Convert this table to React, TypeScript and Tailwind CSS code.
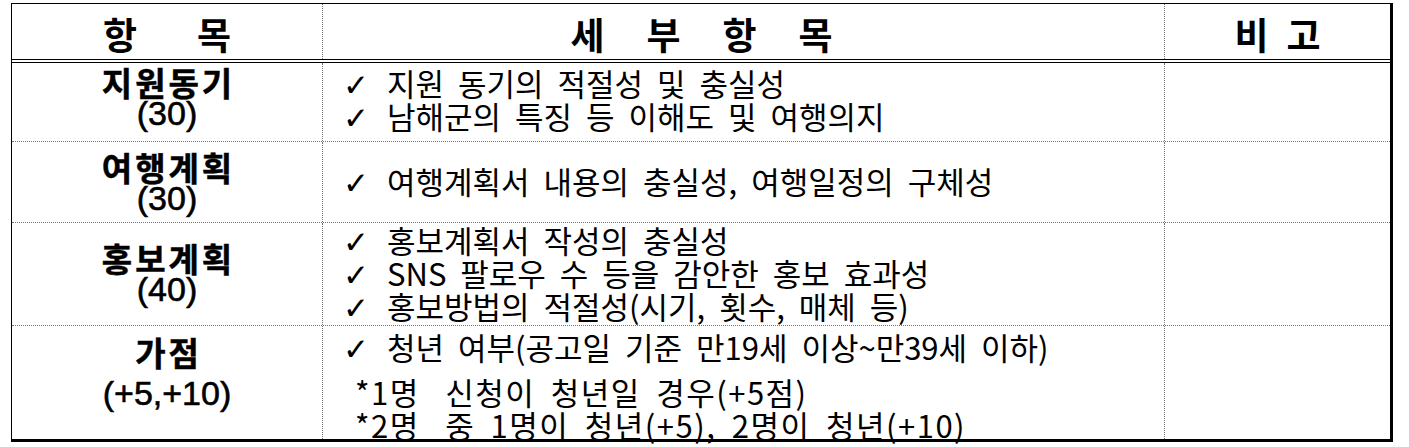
const Check = () => (
  <span className="inline-block w-[44px] font-['DejaVu_Sans',sans-serif] font-bold text-[31px] leading-none">✓</span>
);

const Line = ({ children, className = "" }: { children: React.ReactNode; className?: string }) => (
  <div className={`leading-[29px] whitespace-nowrap ${className}`}>{children}</div>
);

const Label = ({ name, score, gap = "" }: { name: string; score: string; gap?: string }) => (
  <>
    <div className="font-['Noto_Sans_CJK_KR',sans-serif] font-bold text-[33px] tracking-[3px] leading-[31px] pl-[3px] [-webkit-text-stroke:0.5px_black]">
      {name}
    </div>
    <div className={`font-['Liberation_Sans',sans-serif] text-[34px] leading-[31px] [-webkit-text-stroke:0.6px_black] ${gap}`}>
      {score}
    </div>
  </>
);

export default function App() {
  return (
    <div className="min-h-screen bg-white pl-[11px] pt-[3px] text-black">
      <div className="w-[1382px] border-l border-t border-r-[3px] border-b-[3px] border-black">
        <div className="flex h-[59px] border-b-4 border-double border-black font-['Noto_Sans_CJK_KR',sans-serif] font-bold text-[37px]">
          <div className="w-[311px] flex items-center justify-center gap-[60px] pt-[6px] border-r border-dotted border-[#777]">
            <span>항</span>
            <span>목</span>
          </div>
          <div className="w-[842px] flex items-center justify-center gap-[42px] pr-[84px] pt-[6px] border-r border-dotted border-[#777]">
            <span>세</span>
            <span>부</span>
            <span>항</span>
            <span>목</span>
          </div>
          <div className="flex-1 flex items-center justify-center gap-[18px] pt-[6px]">
            <span>비</span>
            <span>고</span>
          </div>
        </div>

        <div className="flex h-[79px] border-b border-dotted border-[#777]">
          <div className="w-[311px] flex flex-col items-center justify-center pb-[8px] border-r border-dotted border-[#777]">
            <Label name="지원동기" score="(30)" />
          </div>
          <div className="w-[842px] flex flex-col justify-center pl-[20px] pb-[3px] font-['Noto_Sans_CJK_KR',sans-serif] text-[31px] [word-spacing:7px] border-r border-dotted border-[#777]">
            <Line><Check />지원 동기의 적절성 및 충실성</Line>
            <Line><Check />남해군의 특징 등 이해도 및 여행의지</Line>
          </div>
          <div className="flex-1" />
        </div>

        <div className="flex h-[81px] border-b border-dotted border-[#777]">
          <div className="w-[311px] flex flex-col items-center justify-center pt-[2px] border-r border-dotted border-[#777]">
            <Label name="여행계획" score="(30)" />
          </div>
          <div className="w-[842px] flex flex-col justify-center pl-[20px] font-['Noto_Sans_CJK_KR',sans-serif] text-[31px] [word-spacing:7px] border-r border-dotted border-[#777]">
            <Line><Check />여행계획서 내용의 충실성, 여행일정의 구체성</Line>
          </div>
          <div className="flex-1" />
        </div>

        <div className="flex h-[103px] border-b border-dotted border-[#777]">
          <div className="w-[311px] flex flex-col items-center justify-center border-r border-dotted border-[#777]">
            <Label name="홍보계획" score="(40)" />
          </div>
          <div className="w-[842px] flex flex-col justify-center pl-[20px] font-['Noto_Sans_CJK_KR',sans-serif] text-[31px] [word-spacing:7px] border-r border-dotted border-[#777]">
            <Line className="leading-[27px]"><Check />홍보계획서 작성의 충실성</Line>
            <Line className="leading-[27px]"><Check />SNS 팔로우 수 등을 감안한 홍보 효과성</Line>
            <Line className="leading-[27px]"><Check />홍보방법의 적절성(시기, 횟수, 매체 등)</Line>
          </div>
          <div className="flex-1" />
        </div>

        <div className="flex h-[113px]">
          <div className="w-[311px] flex flex-col items-center justify-center pb-[20px] border-r border-dotted border-[#777]">
            <Label name="가점" score="(+5,+10)" gap="mt-[10px] text-[30px]" />
          </div>
          <div className="w-[842px] flex flex-col pl-[20px] pt-[6px] font-['Noto_Sans_CJK_KR',sans-serif] text-[31px] [word-spacing:7px] border-r border-dotted border-[#777]">
            <Line><Check />청년 여부(공고일 기준 만19세 이상~만39세 이하)</Line>
            <Line className="mt-[12px] pl-[12px] tracking-[1.5px]">
              <span className="mr-[10px]">*1명</span> 신청이 청년일 경우(+5점)
            </Line>
            <Line className="mt-[4px] pl-[12px] tracking-[1.5px]">
              <span className="mr-[10px]">*2명</span> 중 1명이 청년(+5), 2명이 청년(+10)
            </Line>
          </div>
          <div className="flex-1" />
        </div>
      </div>
    </div>
  );
}
